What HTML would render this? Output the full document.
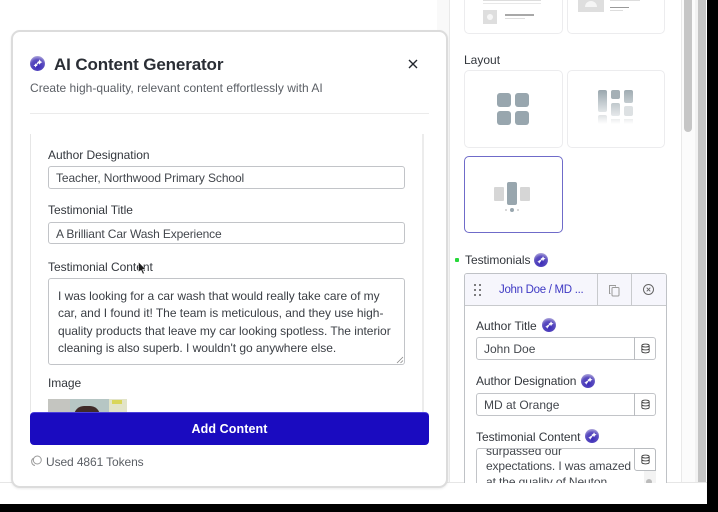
<!DOCTYPE html>
<html><head><meta charset="utf-8"><style>
html,body{margin:0;padding:0;background:#000}
#p{position:relative;width:718px;height:512px;overflow:hidden;background:#000;font-family:"Liberation Sans",sans-serif;color:#2b2f36;filter:blur(.35px)}
#p div,#p svg,#p span{position:absolute;box-sizing:border-box}
.t{white-space:nowrap;font-size:12px;line-height:14px;color:#33373d}
.inp{background:#fff;border:1px solid #c2c4c8;border-radius:3px}
.card{background:#fff;border:1px solid #ececee;border-radius:5px}
</style></head><body><div id="p">
<svg width="0" height="0" style="position:absolute"><defs>
<radialGradient id="g" cx=".5" cy=".7" r=".7"><stop offset="0" stop-color="#3a2bb8"/><stop offset=".65" stop-color="#5d4fc0"/><stop offset="1" stop-color="#b0a9dc"/></radialGradient>
<symbol id="ai" viewBox="0 0 14 14"><circle cx="7" cy="7" r="7" fill="url(#g)"/><path d="M9 3.200l.9 1.700 1.700.8-1.700.8-.9 1.700-.8-1.700-1.700-.8 1.700-.8zM5.200 6.800l.7 1.300 1.300.6-1.300.7-.7 1.300-.6-1.300-1.300-.7 1.300-.6z" fill="#fff"/><path d="M6 8l2-2" stroke="#fff" stroke-width="1.200"/></symbol>
<symbol id="db" viewBox="0 0 12 12"><ellipse cx="6" cy="2.800" rx="4" ry="1.600" fill="none" stroke="#444" stroke-width="1"/><path d="M2 2.800v6.400c0 .9 1.800 1.600 4 1.600s4-.7 4-1.600V2.800M2 6c0 .9 1.800 1.600 4 1.600s4-.7 4-1.600" fill="none" stroke="#444" stroke-width="1"/></symbol>
</defs></svg>

<div style="left:0;top:0;width:707px;height:504px;background:#fff"></div>
<div style="left:437px;top:0;width:12px;height:483px;background:#f9f9f9"></div>
<div style="left:449px;top:0;width:1px;height:483px;background:#e9e9e9"></div>
<div style="left:681px;top:0;width:1px;height:483px;background:#e9e9e9"></div>
<div style="left:682px;top:0;width:13px;height:483px;background:#fbfbfb"></div>
<div style="left:684px;top:0;width:8px;height:132px;background:#c6c6c6;border-radius:0 0 4px 4px"></div>
<div style="left:695px;top:0;width:3px;height:483px;background:#f2f2f2"></div>
<div style="left:698px;top:0;width:8px;height:483px;background:#c5c5c5"></div>
<div style="left:0;top:482px;width:707px;height:1px;background:#e6e6e6"></div>

<!-- right: top cards -->
<div class="card" style="left:464px;top:-20px;width:99px;height:54px"></div>
<div class="card" style="left:567px;top:-20px;width:98px;height:54px"></div>
<div style="left:483px;top:0;width:58px;height:1px;background:#ddd"></div>
<div style="left:483px;top:3px;width:58px;height:1px;background:#e8e8e8"></div>
<div style="left:483px;top:10px;width:14px;height:14px;background:#dedede"></div>
<div style="left:487px;top:14px;width:6px;height:6px;background:#f6f6f6;border-radius:3px"></div>
<div style="left:505px;top:14px;width:29px;height:2px;background:#a8a8a8"></div>
<div style="left:505px;top:18px;width:20px;height:1px;background:#ddd"></div>
<div style="left:578px;top:-6px;width:26px;height:18px;background:#dedede"></div>
<div style="left:585px;top:1px;width:12px;height:6px;background:#f5f5f5;border-radius:6px 6px 0 0"></div>
<div style="left:610px;top:0;width:30px;height:1px;background:#ddd"></div>
<div style="left:610px;top:7px;width:19px;height:1px;background:#999"></div>
<div style="left:610px;top:10px;width:13px;height:1px;background:#ddd"></div>

<div class="t" style="left:464px;top:53px">Layout</div>
<div class="card" style="left:464px;top:70px;width:99px;height:78px"></div>
<div class="card" style="left:567px;top:70px;width:98px;height:78px"></div>
<div style="left:497px;top:93px;width:14px;height:14px;background:#98a6ae;border-radius:3px"></div>
<div style="left:515px;top:93px;width:14px;height:14px;background:#98a6ae;border-radius:3px"></div>
<div style="left:497px;top:111px;width:14px;height:14px;background:#98a6ae;border-radius:3px"></div>
<div style="left:515px;top:111px;width:14px;height:14px;background:#98a6ae;border-radius:3px"></div>
<div style="left:598px;top:90px;width:9px;height:22px;background:linear-gradient(#9aa7ae,#e2e6e8);border-radius:2px"></div>
<div style="left:611px;top:90px;width:9px;height:9px;background:#a5b0b6;border-radius:2px"></div>
<div style="left:624px;top:90px;width:9px;height:13px;background:linear-gradient(#a0acb2,#c4ccd0);border-radius:2px"></div>
<div style="left:611px;top:103px;width:9px;height:13px;background:linear-gradient(#c0c8cc,#e6e9eb);border-radius:2px"></div>
<div style="left:624px;top:106px;width:9px;height:10px;background:#dde1e3;border-radius:2px"></div>
<div style="left:598px;top:115px;width:9px;height:9px;background:linear-gradient(#e0e3e5,#fff);border-radius:2px"></div>
<div style="left:611px;top:119px;width:9px;height:5px;background:linear-gradient(#eceeef,#fff)"></div>
<div style="left:624px;top:119px;width:9px;height:5px;background:linear-gradient(#eceeef,#fff)"></div>

<div style="left:464px;top:156px;width:99px;height:77px;border:1.500px solid #6f6bc9;border-radius:5px;background:#fff"></div>
<div style="left:494px;top:187px;width:10px;height:14px;background:#d6d6d6;border-radius:1px"></div>
<div style="left:507px;top:182px;width:10px;height:23px;background:#98a6ae;border-radius:2px"></div>
<div style="left:520px;top:187px;width:10px;height:14px;background:#d6d6d6;border-radius:1px"></div>
<div style="left:510px;top:208px;width:4px;height:4px;background:#98a6ae;border-radius:2px"></div>
<div style="left:505px;top:209px;width:2px;height:2px;background:#ccc;border-radius:1px"></div>
<div style="left:517px;top:209px;width:2px;height:2px;background:#ccc;border-radius:1px"></div>

<!-- Testimonials -->
<div style="left:455px;top:258px;width:4px;height:4px;background:#27d83a;border-radius:1px"></div>
<div class="t" style="left:465px;top:253px;letter-spacing:-.05px">Testimonials</div>
<svg style="left:534px;top:253px" width="14" height="14"><use href="#ai"/></svg>
<div style="left:464px;top:273px;width:203px;height:220px;border:1px solid #bfc2c6;border-radius:3px;background:#fff"></div>
<div style="left:465px;top:274px;width:201px;height:32px;background:#f6f6fc;border-bottom:1px solid #c8cacd;border-radius:2px 2px 0 0"></div>
<div style="left:597px;top:274px;width:1px;height:32px;background:#c8cacd"></div>
<div style="left:631px;top:274px;width:1px;height:32px;background:#c8cacd"></div>
<svg style="left:473px;top:283px" width="9" height="14"><g fill="#555"><circle cx="2" cy="2" r="1"/><circle cx="7" cy="2" r="1"/><circle cx="2" cy="7" r="1"/><circle cx="7" cy="7" r="1"/><circle cx="2" cy="12" r="1"/><circle cx="7" cy="12" r="1"/></g></svg>
<div class="t" style="left:499px;top:283px;color:#3f3ac4;font-size:11.500px;letter-spacing:-.3px">John Doe / MD ...</div>
<svg style="left:608px;top:284px" width="13" height="13" fill="none" stroke="#9a9a9a" stroke-width="1"><path d="M2.500 9.500h-1v-8h6v1"/><rect x="4" y="3.500" width="7" height="8.500" rx="1"/></svg>
<svg style="left:642px;top:283px" width="13" height="13" fill="none" stroke="#666" stroke-width="1"><circle cx="6.500" cy="6.500" r="5"/><path d="M4.700 4.700l3.600 3.600M8.300 4.700l-3.600 3.600"/></svg>

<div class="t" style="left:476px;top:319px">Author Title</div>
<svg style="left:542px;top:318px" width="14" height="14"><use href="#ai"/></svg>
<div class="inp" style="left:476px;top:337px;width:180px;height:23px"></div>
<div style="left:634px;top:337px;width:1px;height:23px;background:#b9bcc0"></div>
<div class="t" style="left:484px;top:342px;color:#43474d">John Doe</div>
<svg style="left:640px;top:343px" width="11" height="11"><use href="#db"/></svg>

<div class="t" style="left:476px;top:374px;letter-spacing:-.1px">Author Designation</div>
<svg style="left:581px;top:374px" width="14" height="14"><use href="#ai"/></svg>
<div class="inp" style="left:476px;top:393px;width:180px;height:23px"></div>
<div style="left:634px;top:393px;width:1px;height:23px;background:#b9bcc0"></div>
<div class="t" style="left:484px;top:398px;color:#43474d">MD at Orange</div>
<svg style="left:640px;top:399px" width="11" height="11"><use href="#db"/></svg>

<div class="t" style="left:476px;top:430px;letter-spacing:-.05px">Testimonial Content</div>
<svg style="left:585px;top:429px" width="14" height="14"><use href="#ai"/></svg>
<div class="inp" style="left:476px;top:448px;width:180px;height:50px;overflow:hidden">
<div class="t" style="left:9px;top:-5px;color:#43474d">surpassed our</div>
<div class="t" style="left:9px;top:10px;color:#43474d;letter-spacing:-.12px">expectations. I was amazed</div>
<div class="t" style="left:9px;top:26px;color:#43474d;letter-spacing:-.1px">at the quality of Neuton</div>
</div>
<div style="left:634px;top:448px;width:22px;height:23px;background:#fff;border:1px solid #b9bcc0;border-radius:0 3px 0 3px"></div>
<svg style="left:640px;top:454px" width="11" height="11"><use href="#db"/></svg>
<div style="left:644px;top:471px;width:12px;height:27px;background:#f3f3f3"></div>
<div style="left:646px;top:479px;width:6px;height:6px;background:#bbb;border-radius:3px"></div>

<div style="left:0;top:483px;width:707px;height:21px;background:#fff"></div>

<!-- modal -->
<div style="left:11px;top:30px;width:437px;height:458px;background:#fff;border:2px solid #dcdcdc;border-radius:9px;box-shadow:0 1px 2px rgba(0,0,0,.08)"></div>
<svg style="left:30px;top:56px" width="15" height="15"><use href="#ai"/></svg>
<div class="t" style="left:54px;top:55px;font-size:17px;line-height:20px;font-weight:700;color:#2a2e35;letter-spacing:-.13px">AI Content Generator</div>
<svg style="left:407px;top:58px" width="12" height="12" fill="none" stroke="#23272e" stroke-width="1.400"><path d="M2 2l8 8M10 2l-8 8"/></svg>
<div class="t" style="left:30px;top:81px;color:#5b5f65;letter-spacing:.03px">Create high-quality, relevant content effortlessly with AI</div>
<div style="left:30px;top:113px;width:399px;height:1px;background:#ebebeb"></div>

<div style="left:30px;top:134px;width:1px;height:278px;background:#e6e6e6"></div>
<div style="left:422px;top:134px;width:2px;height:278px;background:#ececec"></div>

<div class="t" style="left:48px;top:148px;letter-spacing:-.03px">Author Designation</div>
<div class="inp" style="left:48px;top:166px;width:357px;height:23px"></div>
<div class="t" style="left:56px;top:171px;color:#43474d;letter-spacing:-.1px">Teacher, Northwood Primary School</div>

<div class="t" style="left:48px;top:203px;letter-spacing:-.03px">Testimonial Title</div>
<div class="inp" style="left:48px;top:222px;width:357px;height:22px"></div>
<div class="t" style="left:56px;top:227px;color:#43474d;letter-spacing:-.13px">A Brilliant Car Wash Experience</div>

<div class="t" style="left:48px;top:260px;letter-spacing:-.03px">Testimonial Content</div>
<svg style="left:137px;top:261px" width="11" height="15"><path d="M1.500 1l0 10 2.500-2 1.800 4 1.500-.7-1.800-3.800 3-.3z" fill="#1d1d1d" stroke="#fff" stroke-width=".5"/></svg>

<div class="inp" style="left:48px;top:278px;width:357px;height:87px"></div>
<div class="t" style="left:58px;top:288px;line-height:17.400px;color:#3a3e44;letter-spacing:-.03px;white-space:pre">I was looking for a car wash that would really take care of my
car, and I found it! The team is meticulous, and they use high-
quality products that leave my car looking spotless. The interior
cleaning is also superb. I wouldn't go anywhere else.</div>
<svg style="left:396px;top:356px" width="8" height="8" stroke="#888" stroke-width=".8"><path d="M1 7l6-6M4.500 7l2.500-2.500"/></svg>

<div class="t" style="left:48px;top:376px;letter-spacing:-.03px">Image</div>
<div style="left:48px;top:399px;width:79px;height:14px;overflow:hidden;background:#b6c6c4">
<div style="left:0;top:0;width:22px;height:14px;background:#c4c5c0"></div>
<div style="left:61px;top:0;width:18px;height:14px;background:#e2e4c8"></div>
<div style="left:64px;top:1px;width:10px;height:4px;background:#d9d65a"></div>
<div style="left:26px;top:7px;width:26px;height:20px;border-radius:13px;background:#3f2a28"></div>
</div>

<div style="left:30px;top:412px;width:399px;height:33px;background:#1a0bc0;border-radius:4px;border-top:1px solid #4a3fdc"></div>
<div class="t" style="left:30px;top:422px;width:399px;text-align:center;color:#fff;font-size:12.500px;font-weight:700;letter-spacing:.1px">Add Content</div>

<svg style="left:30px;top:455px" width="12" height="13" fill="none" stroke="#9a9a9a" stroke-width="1"><circle cx="7.300" cy="5" r="4"/><path d="M3.500 3.200a4 4 0 0 0 1.500 7.300"/></svg>
<div class="t" style="left:46px;top:455px;color:#5b5f65;letter-spacing:-.1px">Used 4861 Tokens</div>
</div></body></html>
